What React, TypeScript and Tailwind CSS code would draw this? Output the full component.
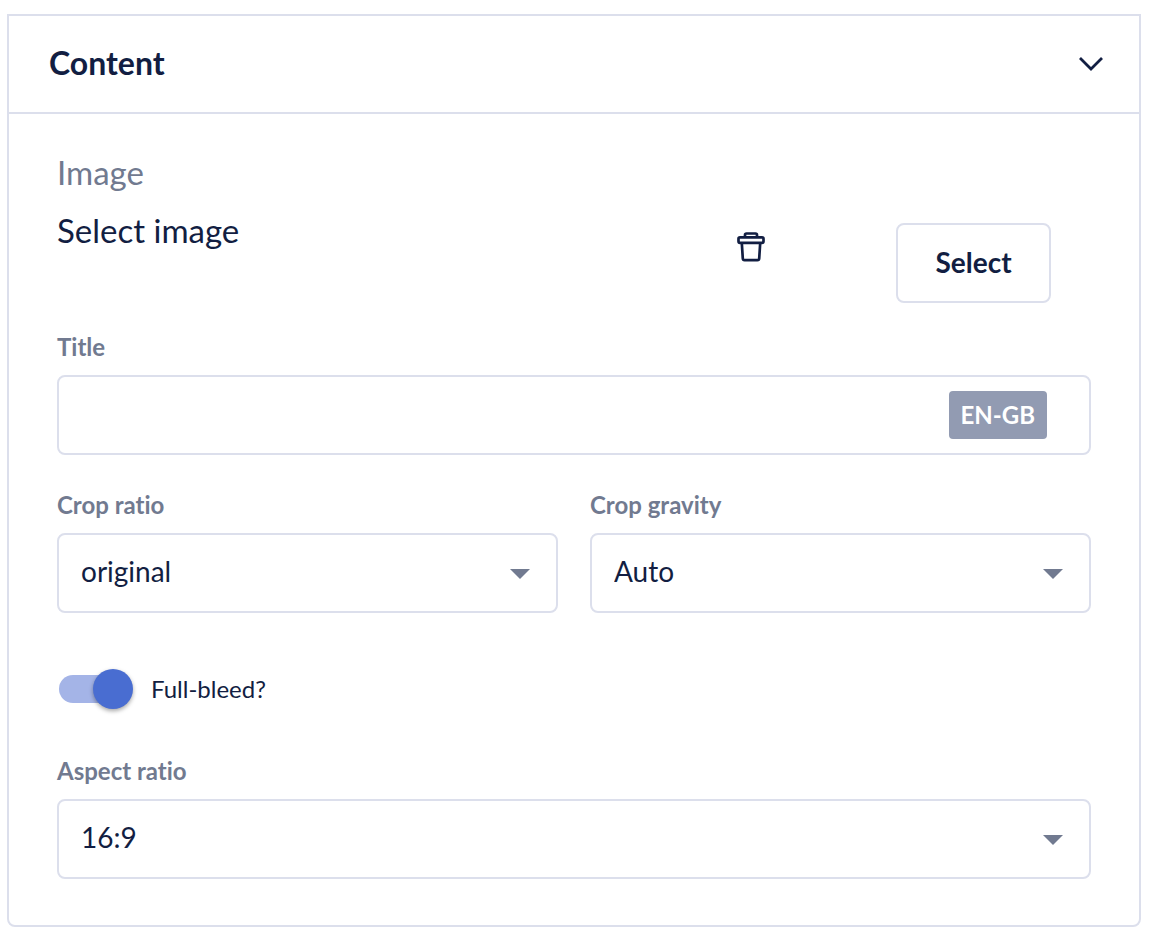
import React, { useState } from "react";

type SelectFieldProps = {
  id: string;
  label: string;
  options: string[];
};

const labelClass = "block text-2xl font-bold text-[#717a90]";

const SelectField = ({ id, label, options }: SelectFieldProps) => {
  return (
    <div>
      <label htmlFor={id} className={labelClass}>
        {label}
      </label>
      <div className="relative mt-3">
        <select
          id={id}
          className="block w-full h-20 pl-[22px] pr-20 pb-1 text-[28px] bg-white border-2 border-[#dcdfec] rounded-lg appearance-none"
        >
          {options.map((option) => (
            <option key={option}>{option}</option>
          ))}
        </select>
        <svg
          className="absolute right-7 top-9 w-5 h-[10px] pointer-events-none"
          viewBox="0 0 20 10"
          fill="#717a90"
        >
          <path d="M0 0h20L10 10z" />
        </svg>
      </div>
    </div>
  );
};

const TrashIcon = () => (
  <svg
    className="w-7 h-8"
    viewBox="0 0 28 32"
    fill="none"
    stroke="currentColor"
    strokeWidth="2.7"
    strokeLinejoin="round"
  >
    <path d="M8 6V4a1.500 1.500 0 0 1 1.500-1.500h9A1.500 1.500 0 0 1 20 4v2" />
    <rect x="1.500" y="6.300" width="25" height="5.500" rx="1.500" />
    <path d="M4.800 12l1 15.500a1.800 1.800 0 0 0 1.800 1.700h12.800a1.800 1.800 0 0 0 1.800-1.700l1-15.500" />
  </svg>
);

const App = () => {
  const [open, setOpen] = useState(true);
  const [fullBleed, setFullBleed] = useState(true);

  return (
    <main className="pl-[7px] pr-[13px] pt-[14px] bg-white text-[#121e42] font-['Lato','Noto_Sans',sans-serif] [font-variant-ligatures:none]">
      <section className="border-2 border-[#dcdfec] rounded-b-lg">
        <h2 className="text-[32px] leading-10 font-bold">
          <button
            type="button"
            aria-expanded={open}
            onClick={() => setOpen(!open)}
            className="flex items-center justify-between w-full h-24 pl-10 pr-9 pb-0.5"
          >
            Content
            <svg
              className="w-6 h-4"
              viewBox="0 0 24 16"
              fill="none"
              stroke="currentColor"
              strokeWidth="2.8"
            >
              <path d="M1 3l11 11L23 3" />
            </svg>
          </button>
        </h2>
        {open && (
          <form className="px-12 pt-[38px] pb-[46px] border-t-2 border-[#dcdfec]">
            <p className="text-[33px] leading-10 text-[#717a90]">Image</p>
            <div className="flex items-start pt-[18px] pr-10">
              <p className="flex-1 text-[33px] leading-10">Select image</p>
              <div className="flex items-start gap-[131px] pt-[13px]">
                <button type="button" aria-label="Remove image" className="pt-2">
                  <TrashIcon />
                </button>
                <button
                  type="button"
                  className="w-[155px] h-20 pb-0.5 text-[28px] font-bold border-2 border-[#dcdfec] rounded-lg"
                >
                  Select
                </button>
              </div>
            </div>

            <div className="mt-7">
              <label htmlFor="title" className={labelClass}>
                Title
              </label>
              <div className="flex items-center h-20 mt-3 pr-[42px] border-2 border-[#dcdfec] rounded-lg">
                <input
                  id="title"
                  type="text"
                  className="flex-1 h-full px-[22px] text-[28px] outline-none"
                />
                <span className="px-3 py-2 text-2xl font-bold text-white bg-[#929bb2] rounded-sm">
                  EN-GB
                </span>
              </div>
            </div>

            <div className="grid grid-cols-2 gap-8 mt-[34px]">
              <SelectField
                id="crop-ratio"
                label="Crop ratio"
                options={["original", "16:9", "4:3", "1:1"]}
              />
              <SelectField
                id="crop-gravity"
                label="Crop gravity"
                options={["Auto", "Center", "Face"]}
              />
            </div>

            <label className="flex items-center w-fit gap-[18px] mt-14 pl-0.5 text-2xl">
              <span className="relative flex items-center w-[74px] h-10">
                <input
                  type="checkbox"
                  role="switch"
                  checked={fullBleed}
                  onChange={(e) => setFullBleed(e.target.checked)}
                  className="peer absolute inset-0 w-full h-full opacity-0"
                />
                <span className="w-[68px] h-7 bg-[#c9cede] rounded-full peer-checked:bg-[#a4b4e7]" />
                <span className="absolute left-0 w-10 h-10 bg-white rounded-full shadow-[0_2px_4px_rgba(0,0,0,0.35)] pointer-events-none peer-checked:left-auto peer-checked:right-0 peer-checked:bg-[#496dd1]" />
              </span>
              Full-bleed?
            </label>

            <div className="mt-[46px]">
              <SelectField
                id="aspect-ratio"
                label="Aspect ratio"
                options={["16:9", "4:3", "1:1"]}
              />
            </div>
          </form>
        )}
      </section>
    </main>
  );
};

export default App;
